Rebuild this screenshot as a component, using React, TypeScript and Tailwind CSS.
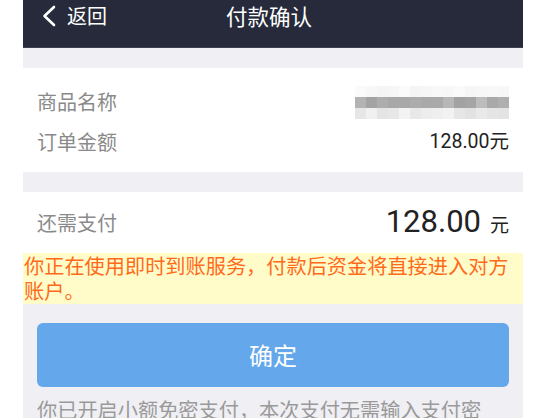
import React from "react";

const CJK = "font-['Noto_Sans_CJK_SC','Noto_Sans',sans-serif]";
const NUM = "font-['Roboto','Noto_Sans_CJK_SC',sans-serif]";

// mosaic cells that hide the product name
const MOSAIC = [
  ["#fafafa", "#f7f7f7", "#f5f5f5", "#f6f6f6", "#fbfbfb", "#f5f5f5", "#f6f6f6", "#f8f8f8", "#f7f7f7", "#fafafa", "#f6f6f6", "#f7f7f7", "#f8f8f8", "#f7f7f7"],
  ["#b3b3b3", "#a3a3a3", "#adadad", "#a8a8a8", "#a8a8a8", "#acacac", "#a9a9a9", "#aaaaaa", "#b7b7b7", "#a2a2a2", "#a5a5a5", "#bcbcbc", "#a9a9a9", "#afafaf"],
  ["#e6e6e6", "#f0f0f0", "#e4e4e4", "#e7e7e7", "#f3f3f3", "#e8e8e8", "#ededed", "#efefef", "#f2f2f2", "#e6e6e6", "#e2e2e2", "#e9e9e9", "#e5e5e5", "#e3e3e3"],
];

function Mosaic() {
  return (
    <div className="flex flex-col">
      {MOSAIC.map((row, r) => (
        <div key={r} className="flex h-[11px]">
          {row.map((c, i) => (
            <div key={i} className="w-[11px] h-full" style={{ backgroundColor: c }} />
          ))}
        </div>
      ))}
    </div>
  );
}

function Header() {
  return (
    <div className="h-[48px] bg-[#262a3b] border-b border-[#3b4055]">
      <div className="grid grid-cols-[1fr_auto_1fr] h-[31px] items-center pr-[8px]">
        <div className="flex items-center pl-[18px] gap-[10px] text-white">
          <svg width="16" height="22" viewBox="0 0 16 22" fill="none">
            <path d="M13 2 L3.5 11 L13 20" stroke="white" strokeWidth="2.6" strokeLinecap="round" strokeLinejoin="round" />
          </svg>
          <span className={`${CJK} text-[20px] leading-none`}>返回</span>
        </div>
        <span className={`${CJK} text-white text-[21.5px] leading-none`}>付款确认</span>
        <div />
      </div>
    </div>
  );
}

export default function App() {
  return (
    <div className="w-[537px] h-[418px] bg-white overflow-hidden">
      <div className="ml-[23px] w-[500px] h-full bg-[#efeff4]">
        <Header />
        <div className="h-[20px]" />
        <section className="bg-white h-[104px] px-[14px] pt-[15px]">
          <div className="flex items-center justify-between h-[38px]">
            <span className={`${CJK} text-[20px] text-[#8a8a8a]`}>商品名称</span>
            <Mosaic />
          </div>
          <div className="flex items-center justify-between h-[42px]">
            <span className={`${CJK} text-[20px] text-[#8a8a8a]`}>订单金额</span>
            <span className={`${NUM} text-[19.5px] text-[#222]`}>128.00元</span>
          </div>
        </section>
        <div className="h-[20px]" />
        <section className="bg-white h-[61px] px-[14px] flex items-center justify-between">
          <span className={`${CJK} text-[20px] text-[#8a8a8a]`}>还需支付</span>
          <span className="flex items-baseline gap-[9px] text-[#222]">
            <span className={`${NUM} text-[31px]`}>128.00</span>
            <span className={`${CJK} text-[19px]`}>元</span>
          </span>
        </section>
        <div className={`${CJK} bg-[#fffcca] h-[51px] pl-[1px] text-[#ff6b1a] text-[20.2px] leading-[25px]`}>
          你正在使用即时到账服务，付款后资金将直接进入对方账户。
        </div>
        <div className="pt-[19px] px-[14px]">
          <button className={`${CJK} block w-full h-[64px] rounded-[6px] bg-[#64a7ea] text-white text-[24px]`}>
            确定
          </button>
        </div>
        <p className={`${CJK} mt-[10px] px-[14px] text-[20.2px] leading-[25px] text-[#9a9a9a]`}>
          你已开启小额免密支付，本次支付无需输入支付密码。
        </p>
      </div>
    </div>
  );
}
